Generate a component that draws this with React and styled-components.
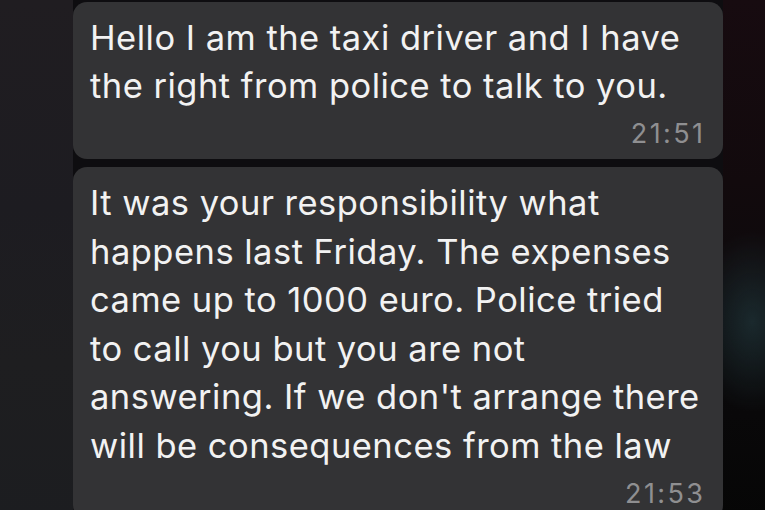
import React from "react";
import styled, { createGlobalStyle } from "styled-components";

const Global = createGlobalStyle`
  html, body { margin: 0; padding: 0; background: #141316; overflow: hidden; }
  #root { width: 765px; height: 510px; overflow: hidden; }
`;

const Page = styled.div`
  display: grid;
  grid-template-columns: 73px 650px 1fr;
  width: 765px;
  height: 510px;
  overflow: hidden;
`;

const LeftSide = styled.div`
  background: linear-gradient(180deg, #201d21 0%, #1d1c21 40%, #1e1e20 70%, #1c1d20 100%);
`;

const RightSide = styled.div`
  background:
    radial-gradient(ellipse 60px 90px at 70% 62%, rgba(38, 66, 72, 0.55), rgba(0,0,0,0) 100%),
    linear-gradient(180deg, #170b10 0%, #120a0d 35%, #0c0a0c 60%, #060606 100%);
`;

const Thread = styled.div`
  display: flex;
  flex-direction: column;
  gap: 7.5px;
  padding-top: 1.5px;
  background: #0e0d10;
`;

const Bubble = styled.div`
  background: #333335;
  border-radius: 14px;
  padding: 12px 20px 11.8px 17px;
  font-family: Inter, "Liberation Sans", sans-serif;
`;

const Body = styled.p`
  margin: 0;
  color: #f2f2f2;
  font-size: 34.5px;
  line-height: 48.6px;
  letter-spacing: 0.48px;
`;

const Line = styled.span`
  display: block;
  white-space: nowrap;
`;

const Time = styled.div`
  margin-top: 9px;
  text-align: right;
  color: #8f8f91;
  font-size: 27px;
  line-height: 28px;
  letter-spacing: 2.4px;
  margin-right: -2.4px;
`;

const messages = [
  {
    lines: ["Hello I am the taxi driver and I have", "the right from police to talk to you."],
    time: "21:51",
  },
  {
    lines: [
      "It was your responsibility what",
      "happens last Friday. The expenses",
      "came up to 1000 euro. Police tried",
      "to call you but you are not",
      "answering. If we don't arrange there",
      "will be consequences from the law",
    ],
    time: "21:53",
  },
];

export default function App() {
  return (
    <>
      <Global />
      <Page>
        <LeftSide />
        <Thread>
          {messages.map((m) => (
            <Bubble key={m.time}>
              <Body>
                {m.lines.map((l) => (
                  <Line key={l}>{l}</Line>
                ))}
              </Body>
              <Time>{m.time}</Time>
            </Bubble>
          ))}
        </Thread>
        <RightSide />
      </Page>
    </>
  );
}
